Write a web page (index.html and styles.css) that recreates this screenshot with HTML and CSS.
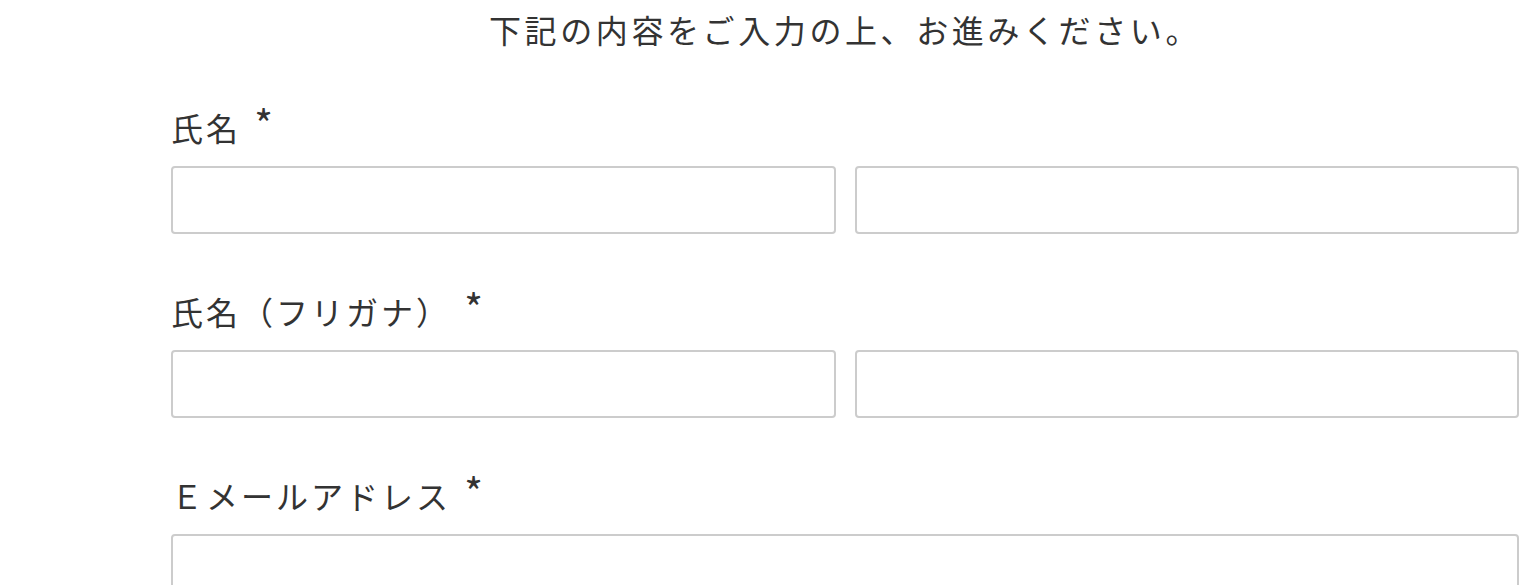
FILE: index.html
```html
<!DOCTYPE html>
<html lang="ja">
<head>
    <meta charset="UTF-8">
    <meta name="viewport" content="width=device-width, initial-scale=1.0">
    <title>お問い合わせ</title>
    <link rel="stylesheet" href="styles.css">
</head>
<body>
    <div class="container">
        <p class="lead">下記の内容をご入力の上、お進みください。</p>
        <form class="entry-form">
            <div class="form-group">
                <label class="form-label">氏名 <span class="req">*</span></label>
                <div class="input-pair">
                    <input type="text" name="last_name">
                    <input type="text" name="first_name">
                </div>
            </div>
            <div class="form-group">
                <label class="form-label">氏名（フリガナ） <span class="req">*</span></label>
                <div class="input-pair">
                    <input type="text" name="last_kana">
                    <input type="text" name="first_kana">
                </div>
            </div>
            <div class="form-group">
                <label class="form-label">Ｅメールアドレス <span class="req">*</span></label>
                <input type="email" name="email">
            </div>
        </form>
    </div>
</body>
</html>
```

FILE: styles.css
```css
body {
    margin: 0;
    font-family: "Noto Sans CJK JP", "Noto Sans", sans-serif;
    color: #333;
    background: #fff;
}

.container {
    margin-left: 171px;
    width: 1348px;
}

.lead {
    margin: 5px 0 0;
    font-size: 32px;
    line-height: 48px;
    letter-spacing: 3.6px;
    text-align: center;
}

.entry-form {
    margin-top: 52px;
}

.form-group {
    margin-bottom: 55px;
}

.form-label {
    display: block;
    font-size: 32px;
    line-height: 44px;
    letter-spacing: 3px;
    margin-bottom: 17px;
}

.form-label .req {
    font-size: 40px;
    line-height: 0;
    vertical-align: 1px;
    margin-left: 3px;
}

.input-pair {
    display: grid;
    grid-template-columns: 1fr 1fr;
    gap: 19px;
}

.form-group input {
    display: block;
    width: 100%;
    height: 68px;
    box-sizing: border-box;
    border: 2px solid #ccc;
    border-radius: 4px;
    background: #fff;
    outline: none;
    font-size: 28px;
    padding: 0 12px;
}
```
